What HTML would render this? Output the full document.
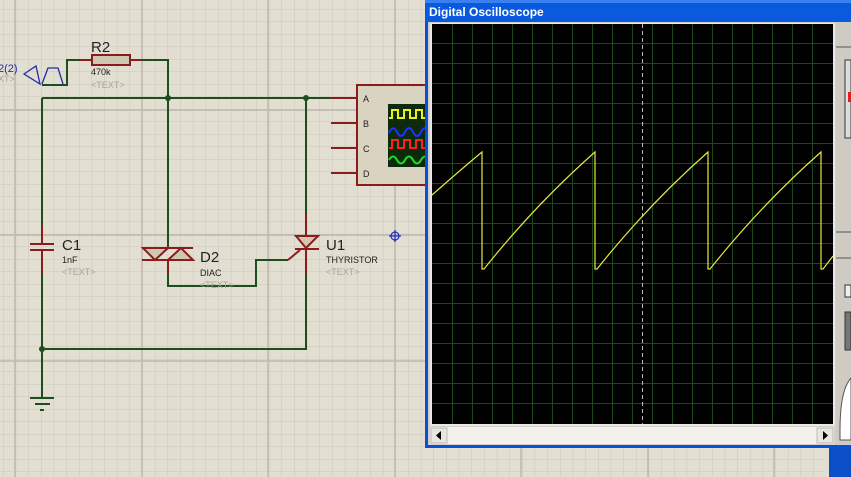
<!DOCTYPE html>
<html><head><meta charset="utf-8"><style>
html,body{margin:0;padding:0;width:851px;height:477px;overflow:hidden;background:#e2ded2;}
svg{display:block}
text{font-family:"Liberation Sans",sans-serif}
</style></head><body>
<svg width="851" height="477" viewBox="0 0 851 477" xmlns="http://www.w3.org/2000/svg">
<defs>
<pattern id="mg" width="12.66" height="12.5" patternUnits="userSpaceOnUse" x="3" y="9">
<rect width="12.66" height="12.5" fill="#e2ded2"/>
<path d="M0 0H12.66M0 0V12.5" stroke="#cbc7ba" stroke-width="1"/>
</pattern>
</defs>
<rect width="851" height="477" fill="url(#mg)"/>
<g stroke="#bdb9ac" stroke-width="1.5">
<path d="M15 0V477M142 0V477M268 0V477M395 0V477M521 0V477M648 0V477M774 0V477"/>
<path d="M0 110H851M0 235H851M0 361H851"/>
</g>
<g stroke="#1d4f1d" stroke-width="2" fill="none">
<path d="M42 98H331"/>
<path d="M42 98V225"/>
<path d="M42 273V398"/>
<path d="M42 349H306V273"/>
<path d="M306 98V213"/>
<path d="M42 85H67V60H80"/>
<path d="M142 60H168V245"/>
<path d="M168 273V286H256V260H288"/>
</g>
<g fill="#1d4f1d"><circle cx="168" cy="98" r="3"/><circle cx="306" cy="98" r="3"/><circle cx="42" cy="349" r="3"/></g>
<g stroke="#8b1c1c" stroke-width="2" fill="none">
<path d="M42 225V244M30 244H54M30 250H54M42 250V273"/>
<path d="M80 60H92M130 60H142"/>
<rect x="92" y="55" width="38" height="10" fill="#cfc8b0"/>
<path d="M168 245V248M142 248H193M142 260H193M168 260V273"/>
<path d="M306 213V236M295 236H319M295 249H319M306 249V273M288 260L300 250"/>
<path d="M331 98H357M331 123H357M331 148H357M331 173H357"/>
</g>
<g stroke="#8b1c1c" stroke-width="2" fill="#cfc8b0">
<path d="M143 248L155 260L168 248Z"/>
<path d="M168 260L181 248L193 260Z"/>
<path d="M296 236L306 248L318 236Z"/>
</g>
<g stroke="#1d4f1d" stroke-width="2"><path d="M30 398H54M35 404H50M40 410H44"/></g>
<g stroke="#2030a0" stroke-width="1.3" fill="none">
<path d="M24 74L36 66L40 84Z"/>
<path d="M42 84L48 68H58L63 84"/>
</g>
<text x="-2" y="72" font-size="11" fill="#2030a0">2(2)</text>
<text x="-2" y="82" font-size="9" fill="#a8a49a">XT&gt;</text>
<g fill="#222">
<text x="91" y="52" font-size="15">R2</text>
<text x="91" y="75" font-size="9">470k</text>
<text x="62" y="250" font-size="15">C1</text>
<text x="62" y="263" font-size="9">1nF</text>
<text x="200" y="262" font-size="15">D2</text>
<text x="200" y="276" font-size="9">DIAC</text>
<text x="326" y="250" font-size="15">U1</text>
<text x="326" y="263" font-size="9">THYRISTOR</text>
</g>
<g fill="#a8a49a" font-size="9">
<text x="91" y="88">&lt;TEXT&gt;</text>
<text x="62" y="275">&lt;TEXT&gt;</text>
<text x="200" y="288">&lt;TEXT&gt;</text>
<text x="326" y="275">&lt;TEXT&gt;</text>
</g>
<g stroke="#2030c0" stroke-width="1.2" fill="none"><circle cx="395" cy="236" r="4"/><path d="M389 236H401M395 230V242"/></g>
<rect x="357" y="85" width="80" height="100" fill="#d8d4c0" stroke="#8b1c1c" stroke-width="2"/>
<g font-size="9" fill="#222"><text x="363" y="102">A</text><text x="363" y="127">B</text><text x="363" y="152">C</text><text x="363" y="177">D</text></g>
<rect x="388" y="104" width="45" height="63" fill="#0c2a0c"/>
<g fill="none" stroke-width="2">
<path d="M389 118H392V110H398V118H404V110H410V118H416V110H422V118H428V110" stroke="#f0f020"/>
<path d="M389 133Q393 124 397 132T405 132T413 132T421 132T429 132" stroke="#2030ff"/>
<path d="M389 148H392V140H398V148H404V140H410V148H416V140H422V148H428V140" stroke="#ff2020"/>
<path d="M389 160Q393 153 397 160T405 160T413 160T421 160T429 160" stroke="#20e020"/>
</g>
<rect x="425" y="0" width="426" height="448" fill="#0a4fd8"/>
<rect x="425" y="0" width="426" height="22" fill="#0a5ae0"/>
<rect x="425" y="0" width="426" height="3" fill="#3a80f0"/>
<text x="429" y="16" font-size="12" font-weight="bold" fill="#fff">Digital Oscilloscope</text>
<rect x="428" y="22" width="423" height="423" fill="#d4d0c8"/>
<rect x="430" y="23" width="405" height="403" fill="#e8e8e8"/>
<rect x="432" y="24" width="401" height="400" fill="#000"/>
<g stroke="#1c4a1c" stroke-width="1">
<path d="M452.5 24V424M472.5 24V424M492.5 24V424M512.5 24V424M532.5 24V424M552.5 24V424M572.5 24V424M592.5 24V424M612.5 24V424M632.5 24V424M652.5 24V424M672.5 24V424M692.5 24V424M712.5 24V424M732.5 24V424M752.5 24V424M772.5 24V424M792.5 24V424M812.5 24V424"/>
<path d="M432 43.5H833M432 63.5H833M432 83.5H833M432 103.5H833M432 123.5H833M432 143.5H833M432 163.5H833M432 183.5H833M432 203.5H833M432 223.5H833M432 243.5H833M432 263.5H833M432 283.5H833M432 303.5H833M432 323.5H833M432 343.5H833M432 363.5H833M432 383.5H833M432 403.5H833"/>
</g>
<path d="M642.5 24V424" stroke="#bbb" stroke-width="1" stroke-dasharray="4 3"/>
<path d="M432 195Q465 166 482 152V269L484 269Q535 205 595 152V269L597 269Q648 205 708 152V269L710 269Q761 205 821 152V269L823 269L833 256" fill="none" stroke="#e8e840" stroke-width="1.2"/>
<rect x="430" y="427" width="404" height="17" fill="#f2f1ec"/>
<rect x="431" y="428" width="16" height="15" fill="#e8e6de" stroke="#bbb"/>
<path d="M436 435.5L441 431V440Z" fill="#000"/>
<rect x="817" y="428" width="16" height="15" fill="#e8e6de" stroke="#bbb"/>
<path d="M828 435.5L823 431V440Z" fill="#000"/>
<rect x="836" y="22" width="15" height="422" fill="#cfcbc3"/>
<path d="M836 47H851M836 232H851M836 258H851" stroke="#555" stroke-width="1"/>
<rect x="845" y="60" width="6" height="78" fill="#ddd" stroke="#333"/>
<rect x="848" y="92" width="3" height="10" fill="#e02020"/>
<rect x="845" y="285" width="6" height="12" fill="#eee" stroke="#333"/>
<rect x="845" y="312" width="6" height="38" fill="#777" stroke="#333"/>
<path d="M840 430Q840 390 851 378V440H840Z" fill="#fff" stroke="#555"/>
<rect x="826" y="448" width="25" height="29" fill="#0a4fc8"/>
<rect x="825" y="448" width="4" height="29" fill="#e2ded2"/>
</svg>
</body></html>
